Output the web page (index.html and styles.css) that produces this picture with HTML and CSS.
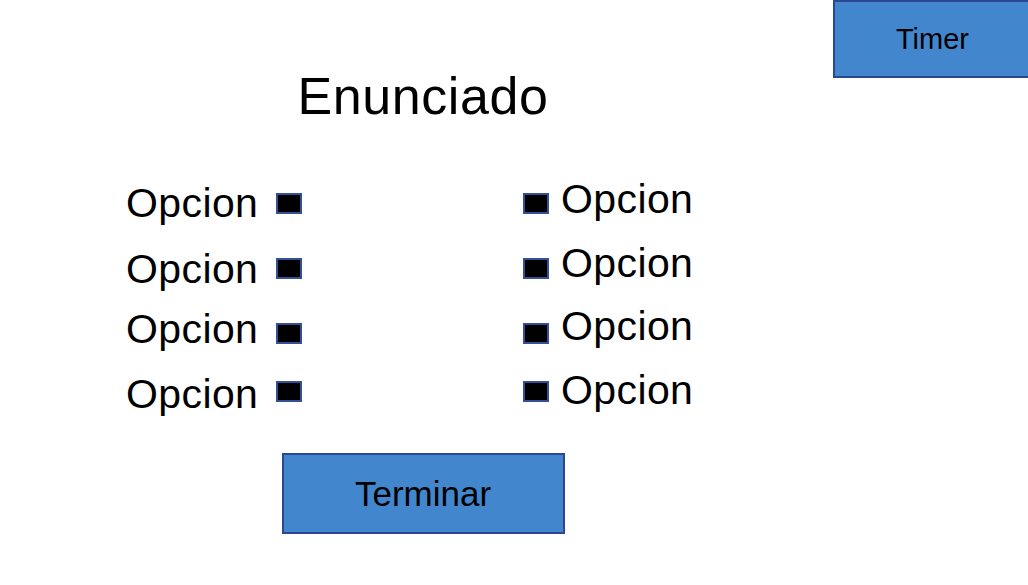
FILE: index.html
```html
<!DOCTYPE html>
<html lang="es">
  <head>
    <meta charset="UTF-8" />
    <meta name="viewport" content="width=device-width, initial-scale=1.0" />
    <title>Pregunta</title>
    <link rel="stylesheet" href="styles.css">
  </head>
  <body>
    <div class="stage">
      <main class="quiz">
        <h1 class="quiz-title">Enunciado</h1>

        <div class="options">
          <div class="option-row">
            <label class="option-left">
              <span class="option-text">Opcion</span>
              <span class="option-box"></span>
            </label>
            <label class="option-right">
              <span class="option-box"></span>
              <span class="option-text">Opcion</span>
            </label>
          </div>
          <div class="option-row">
            <label class="option-left">
              <span class="option-text">Opcion</span>
              <span class="option-box"></span>
            </label>
            <label class="option-right">
              <span class="option-box"></span>
              <span class="option-text">Opcion</span>
            </label>
          </div>
          <div class="option-row">
            <label class="option-left">
              <span class="option-text">Opcion</span>
              <span class="option-box"></span>
            </label>
            <label class="option-right">
              <span class="option-box"></span>
              <span class="option-text">Opcion</span>
            </label>
          </div>
          <div class="option-row">
            <label class="option-left">
              <span class="option-text">Opcion</span>
              <span class="option-box"></span>
            </label>
            <label class="option-right">
              <span class="option-box"></span>
              <span class="option-text">Opcion</span>
            </label>
          </div>
        </div>

        <button class="finish-button">Terminar</button>
      </main>

      <div class="timer">Timer</div>
    </div>
  </body>
</html>
```

FILE: styles.css
```css
/* Reset */
* {
  margin: 0;
  padding: 0;
  box-sizing: border-box;
  font-family: "Liberation Sans", Arial, sans-serif;
}

body {
  background: #fff;
  color: #000;
  overflow: hidden;
}

.stage {
  display: flex;
  align-items: flex-start;
  width: 1028px;
  height: 585px;
  overflow: hidden;
}

/* Question column */
.quiz {
  width: 833px;
  flex-shrink: 0;
  padding-left: 13px;
  display: flex;
  flex-direction: column;
  align-items: center;
}

.quiz-title {
  margin-top: 66px;
  font-size: 52px;
  font-weight: normal;
  line-height: 60px;
  letter-spacing: 0.6px;
}

/* Options */
.options {
  align-self: flex-start;
  margin-top: 57px;
  margin-left: 113px;
  display: flex;
  flex-direction: column;
}

.option-row {
  display: flex;
  align-items: flex-start;
  height: 41px;
  --box-top: 10px;
  --right-shift: -4px;
}

.option-row:nth-child(1) {
  height: 66px;
}

.option-row:nth-child(2) {
  height: 60px;
  --box-top: 9px;
  --right-shift: -6px;
}

.option-row:nth-child(3) {
  height: 65px;
  --box-top: 14px;
  --right-shift: -3px;
}

.option-row:nth-child(4) {
  --box-top: 7px;
}

.option-left,
.option-right {
  display: flex;
  align-items: flex-start;
}

.option-left {
  width: 176px;
  justify-content: space-between;
}

.option-right {
  margin-left: 221px;
  gap: 12px;
}

.option-text {
  font-size: 41px;
  line-height: 41px;
  letter-spacing: 0.4px;
}

.option-right .option-text {
  margin-top: var(--right-shift);
}

.option-box {
  width: 26px;
  height: 21px;
  margin-top: var(--box-top);
  background: #000;
  border: 2px solid #34509a;
}

/* Buttons */
.finish-button {
  margin-top: 38px;
  width: 283px;
  height: 81px;
  background-color: #4287ce;
  border: 2px solid #2b4793;
  color: #000;
  font-size: 35px;
}

.timer {
  flex-shrink: 0;
  width: 199px;
  height: 78px;
  display: flex;
  justify-content: center;
  align-items: center;
  background-color: #4287ce;
  border: 2px solid #2b4793;
  font-size: 29px;
}
```
